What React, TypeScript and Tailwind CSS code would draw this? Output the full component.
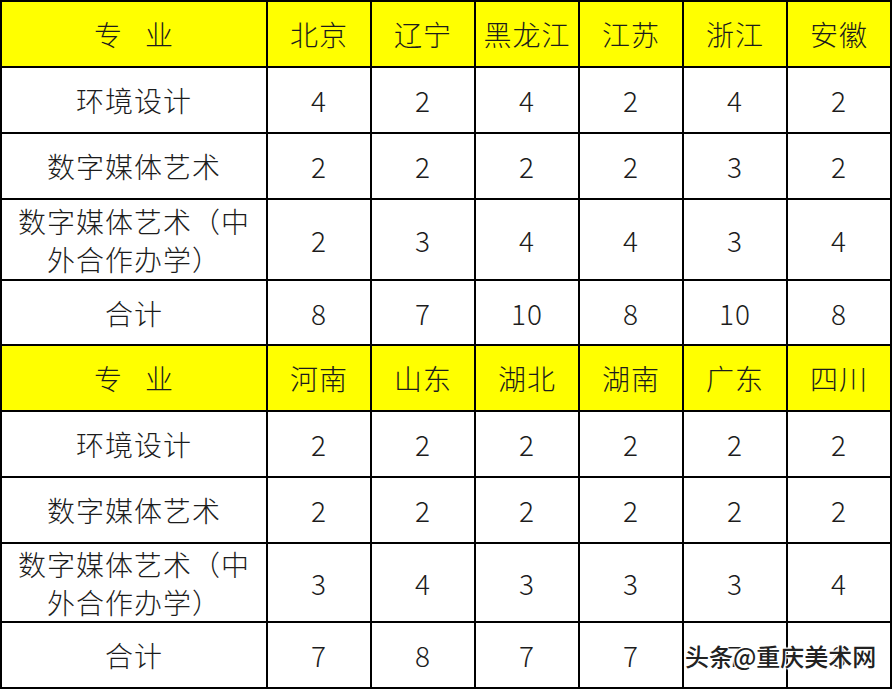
import React from 'react';

type Row = { label: React.ReactNode; values: (number | string)[]; h: string };

const headA = ['北京', '辽宁', '黑龙江', '江苏', '浙江', '安徽'];
const headB = ['河南', '山东', '湖北', '湖南', '广东', '四川'];

const rowsA: Row[] = [
  { label: '环境设计', values: [4, 2, 4, 2, 4, 2], h: 'h-[64px]' },
  { label: '数字媒体艺术', values: [2, 2, 2, 2, 3, 2], h: 'h-[64px]' },
  {
    label: (
      <>
        数字媒体艺术（中
        <br />
        外合作办学）
      </>
    ),
    values: [2, 3, 4, 4, 3, 4],
    h: 'h-[79px]',
  },
  { label: '合计', values: [8, 7, 10, 8, 10, 8], h: 'h-[63px]' },
];

const rowsB: Row[] = [
  { label: '环境设计', values: [2, 2, 2, 2, 2, 2], h: 'h-[64px]' },
  { label: '数字媒体艺术', values: [2, 2, 2, 2, 2, 2], h: 'h-[64px]' },
  {
    label: (
      <>
        数字媒体艺术（中
        <br />
        外合作办学）
      </>
    ),
    values: [3, 4, 3, 3, 3, 4],
    h: 'h-[77px]',
  },
  { label: '合计', values: [7, 8, 7, 7, 7, 8], h: 'h-[64px]' },
];

const cell = 'flex items-center justify-center text-center';

const Header: React.FC<{ cities: string[] }> = ({ cities }) => (
  <>
    <div className={`${cell} h-[64px] bg-[#ffff00]`}>
      <span>专</span>
      <span className="w-[22px]" />
      <span>业</span>
    </div>
    {cities.map((c) => (
      <div key={c} className={`${cell} h-[64px] bg-[#ffff00]`}>
        {c}
      </div>
    ))}
  </>
);

const Body: React.FC<{ rows: Row[] }> = ({ rows }) => (
  <>
    {rows.map((r, i) => (
      <React.Fragment key={i}>
        <div className={`${cell} ${r.h} bg-white leading-[38px]`}>
          <span>{r.label}</span>
        </div>
        {r.values.map((v, j) => (
          <div key={j} className={`${cell} ${r.h} bg-white`}>
            {v}
          </div>
        ))}
      </React.Fragment>
    ))}
  </>
);

export default function App() {
  return (
    <div className="w-[892px] h-[690px] bg-white relative overflow-hidden">
      <div
        className="grid grid-cols-[264px_repeat(6,102px)] gap-[2px] p-[2px] pr-[0px] bg-black w-[892px] text-[28px] font-light text-[#1c1c1c] tracking-[1px]"
        style={{ fontFamily: '"Noto Sans CJK SC Light", "Noto Sans CJK SC", "Noto Sans", sans-serif' }}
      >
        <Header cities={headA} />
        <Body rows={rowsA} />
        <Header cities={headB} />
        <Body rows={rowsB} />
      </div>
      <div
        className="absolute left-[685px] top-[638px] text-[24px] text-[#222] font-medium"
        style={{
          fontFamily: '"Noto Sans CJK SC", sans-serif',
          textShadow:
            '0 0 2px #fff, 0 0 2px #fff, 0 0 3px #fff, 1px 1px 0 #fff, -1px -1px 0 #fff',
        }}
      >
        头条@重庆美术网
      </div>
    </div>
  );
}
